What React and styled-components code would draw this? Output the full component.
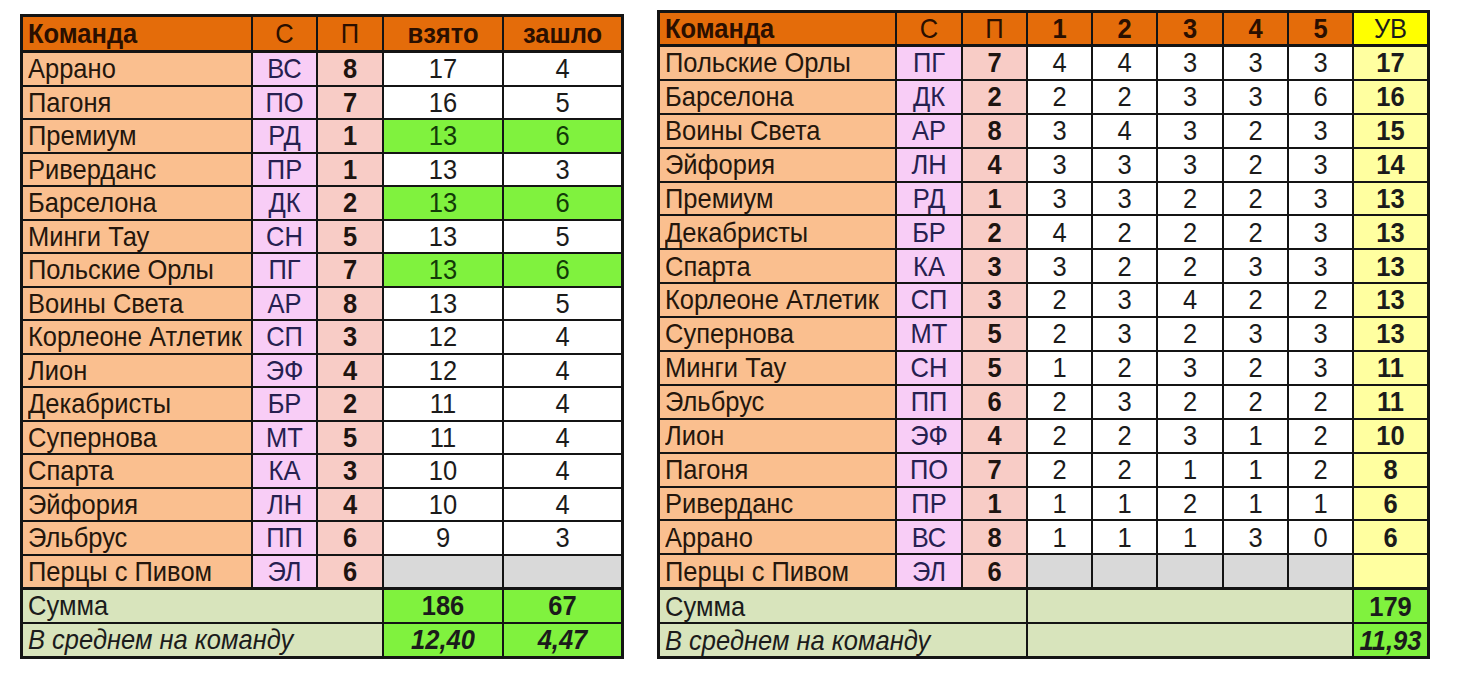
import React from "react";
import styled, { createGlobalStyle } from "styled-components";

const GlobalStyle = createGlobalStyle`
  html, body { margin: 0; padding: 0; background: #ffffff; }
  body { font-family: "Liberation Sans", Arial, sans-serif; }
`;

const C = {
  line: "#141414",
  head: "#E46C0A",
  name: "#FABF8F",
  code: "#F8CDF6",
  pts: "#F8CCC6",
  white: "#FFFFFF",
  green: "#80F23E",
  sum: "#D8E4BC",
  gray: "#D9D9D9",
  yellowHead: "#FFFF00",
  yellow: "#FFFFA0",
};

const Page = styled.div`
  display: flex;
  align-items: flex-start;
  gap: 33px;
  padding: 10px 0 0 20px;
`;

const Sheet = styled.div`
  display: flex;
  flex-direction: column;
  gap: 3px;
  padding: 3px;
  background: ${C.line};
  margin-top: ${(p) => p.$top || 0}px;
`;

const Band = styled.div`
  display: grid;
  grid-template-columns: ${(p) => p.$cols};
  grid-auto-rows: ${(p) => p.$row}px;
  gap: 2px;
`;

const Cell = styled.div`
  display: flex;
  align-items: center;
  justify-content: ${(p) => (p.$left ? "flex-start" : "center")};
  padding-left: ${(p) => (p.$left ? "5px" : "0")};
  grid-column: ${(p) => (p.$span ? `span ${p.$span}` : "auto")};
  background: ${(p) => p.$bg};
  color: ${(p) => p.$color || "#1b1b1b"};
  font-size: 25.5px;
  font-weight: ${(p) => (p.$bold ? 700 : 400)};
  font-style: ${(p) => (p.$italic ? "italic" : "normal")};
  white-space: nowrap;
  overflow: hidden;
  line-height: 1;
`;

const Text = styled.span`
  display: inline-block;
  transform: scaleY(1.08);
  transform-origin: center;
`;

const left = [
  ["Аррано", "ВС", "8", "17", "4"],
  ["Пагоня", "ПО", "7", "16", "5"],
  ["Премиум", "РД", "1", "13", "6", true],
  ["Риверданс", "ПР", "1", "13", "3"],
  ["Барселона", "ДК", "2", "13", "6", true],
  ["Минги Тау", "СН", "5", "13", "5"],
  ["Польские Орлы", "ПГ", "7", "13", "6", true],
  ["Воины Света", "АР", "8", "13", "5"],
  ["Корлеоне Атлетик", "СП", "3", "12", "4"],
  ["Лион", "ЭФ", "4", "12", "4"],
  ["Декабристы", "БР", "2", "11", "4"],
  ["Супернова", "МТ", "5", "11", "4"],
  ["Спарта", "КА", "3", "10", "4"],
  ["Эйфория", "ЛН", "4", "10", "4"],
  ["Эльбрус", "ПП", "6", "9", "3"],
  ["Перцы с Пивом", "ЭЛ", "6", null, null],
];

const right = [
  ["Польские Орлы", "ПГ", "7", [4, 4, 3, 3, 3], "17"],
  ["Барселона", "ДК", "2", [2, 2, 3, 3, 6], "16"],
  ["Воины Света", "АР", "8", [3, 4, 3, 2, 3], "15"],
  ["Эйфория", "ЛН", "4", [3, 3, 3, 2, 3], "14"],
  ["Премиум", "РД", "1", [3, 3, 2, 2, 3], "13"],
  ["Декабристы", "БР", "2", [4, 2, 2, 2, 3], "13"],
  ["Спарта", "КА", "3", [3, 2, 2, 3, 3], "13"],
  ["Корлеоне Атлетик", "СП", "3", [2, 3, 4, 2, 2], "13"],
  ["Супернова", "МТ", "5", [2, 3, 2, 3, 3], "13"],
  ["Минги Тау", "СН", "5", [1, 2, 3, 2, 3], "11"],
  ["Эльбрус", "ПП", "6", [2, 3, 2, 2, 2], "11"],
  ["Лион", "ЭФ", "4", [2, 2, 3, 1, 2], "10"],
  ["Пагоня", "ПО", "7", [2, 2, 1, 1, 2], "8"],
  ["Риверданс", "ПР", "1", [1, 1, 2, 1, 1], "6"],
  ["Аррано", "ВС", "8", [1, 1, 1, 3, 0], "6"],
  ["Перцы с Пивом", "ЭЛ", "6", null, ""],
];

const LCOLS = "228px 63px 64px 118px 117px";
const RCOLS = "235px 64px 63px 63px 63px 64px 63px 63px 73px";

const T = (v) => (v === null || v === undefined || v === "" ? null : <Text>{v}</Text>);

const NameCell = ({ children }) => (
  <Cell $left $bg={C.name} $color="#24160c">{T(children)}</Cell>
);
const CodeCell = ({ children }) => (
  <Cell $bg={C.code} $color="#262050">{T(children)}</Cell>
);
const PtsCell = ({ children }) => (
  <Cell $bg={C.pts} $bold $color="#1e1410">{T(children)}</Cell>
);

function LeftTable() {
  return (
    <Sheet $top={4}>
      <Band $cols={LCOLS} $row={33}>
        <Cell $left $bold $bg={C.head} $color="#2a0f00">{T("Команда")}</Cell>
        <Cell $bg={C.head} $color="#2a0f00">{T("С")}</Cell>
        <Cell $bg={C.head} $color="#2a0f00">{T("П")}</Cell>
        <Cell $bold $bg={C.head} $color="#2a0f00">{T("взято")}</Cell>
        <Cell $bold $bg={C.head} $color="#2a0f00">{T("зашло")}</Cell>
      </Band>
      <Band $cols={LCOLS} $row={31.5}>
        {left.map(([n, c, p, a, b, hi]) => (
          <React.Fragment key={n}>
            <NameCell>{n}</NameCell>
            <CodeCell>{c}</CodeCell>
            <PtsCell>{p}</PtsCell>
            <Cell $bg={a === null ? C.gray : hi ? C.green : C.white} $color={hi ? "#123a08" : "#1b1b1b"}>{T(a)}</Cell>
            <Cell $bg={b === null ? C.gray : hi ? C.green : C.white} $color={hi ? "#123a08" : "#1b1b1b"}>{T(b)}</Cell>
          </React.Fragment>
        ))}
      </Band>
      <Band $cols={LCOLS} $row={32}>
        <Cell $span={3} $left $bg={C.sum}>{T("Сумма")}</Cell>
        <Cell $bold $bg={C.green}>{T("186")}</Cell>
        <Cell $bold $bg={C.green}>{T("67")}</Cell>
        <Cell $span={3} $left $italic $bg={C.sum}>{T("В среднем на команду")}</Cell>
        <Cell $bold $italic $bg={C.green}>{T("12,40")}</Cell>
        <Cell $bold $italic $bg={C.green}>{T("4,47")}</Cell>
      </Band>
    </Sheet>
  );
}

function RightTable() {
  return (
    <Sheet>
      <Band $cols={RCOLS} $row={31}>
        <Cell $left $bold $bg={C.head} $color="#2a0f00">{T("Команда")}</Cell>
        <Cell $bg={C.head} $color="#2a0f00">{T("С")}</Cell>
        <Cell $bg={C.head} $color="#2a0f00">{T("П")}</Cell>
        {[1, 2, 3, 4, 5].map((k) => (
          <Cell key={k} $bold $bg={C.head} $color="#2a0f00">{T(k)}</Cell>
        ))}
        <Cell $bg={C.yellowHead}>{T("УВ")}</Cell>
      </Band>
      <Band $cols={RCOLS} $row={31.9}>
        {right.map(([n, c, p, rounds, total]) => (
          <React.Fragment key={n}>
            <NameCell>{n}</NameCell>
            <CodeCell>{c}</CodeCell>
            <PtsCell>{p}</PtsCell>
            {rounds
              ? rounds.map((v, i) => (
                  <Cell key={i} $bg={C.white}>{T(v)}</Cell>
                ))
              : [0, 1, 2, 3, 4].map((i) => <Cell key={i} $bg={C.gray} />)}
            <Cell $bold $bg={C.yellow}>{T(total)}</Cell>
          </React.Fragment>
        ))}
      </Band>
      <Band $cols={RCOLS} $row={32}>
        <Cell $span={3} $left $bg={C.sum}>{T("Сумма")}</Cell>
        <Cell $span={5} $bg={C.sum} />
        <Cell $bold $bg={C.green}>{T("179")}</Cell>
        <Cell $span={3} $left $italic $bg={C.sum}>{T("В среднем на команду")}</Cell>
        <Cell $span={5} $bg={C.sum} />
        <Cell $bold $italic $bg={C.green}>{T("11,93")}</Cell>
      </Band>
    </Sheet>
  );
}

export default function App() {
  return (
    <>
      <GlobalStyle />
      <Page>
        <LeftTable />
        <RightTable />
      </Page>
    </>
  );
}
